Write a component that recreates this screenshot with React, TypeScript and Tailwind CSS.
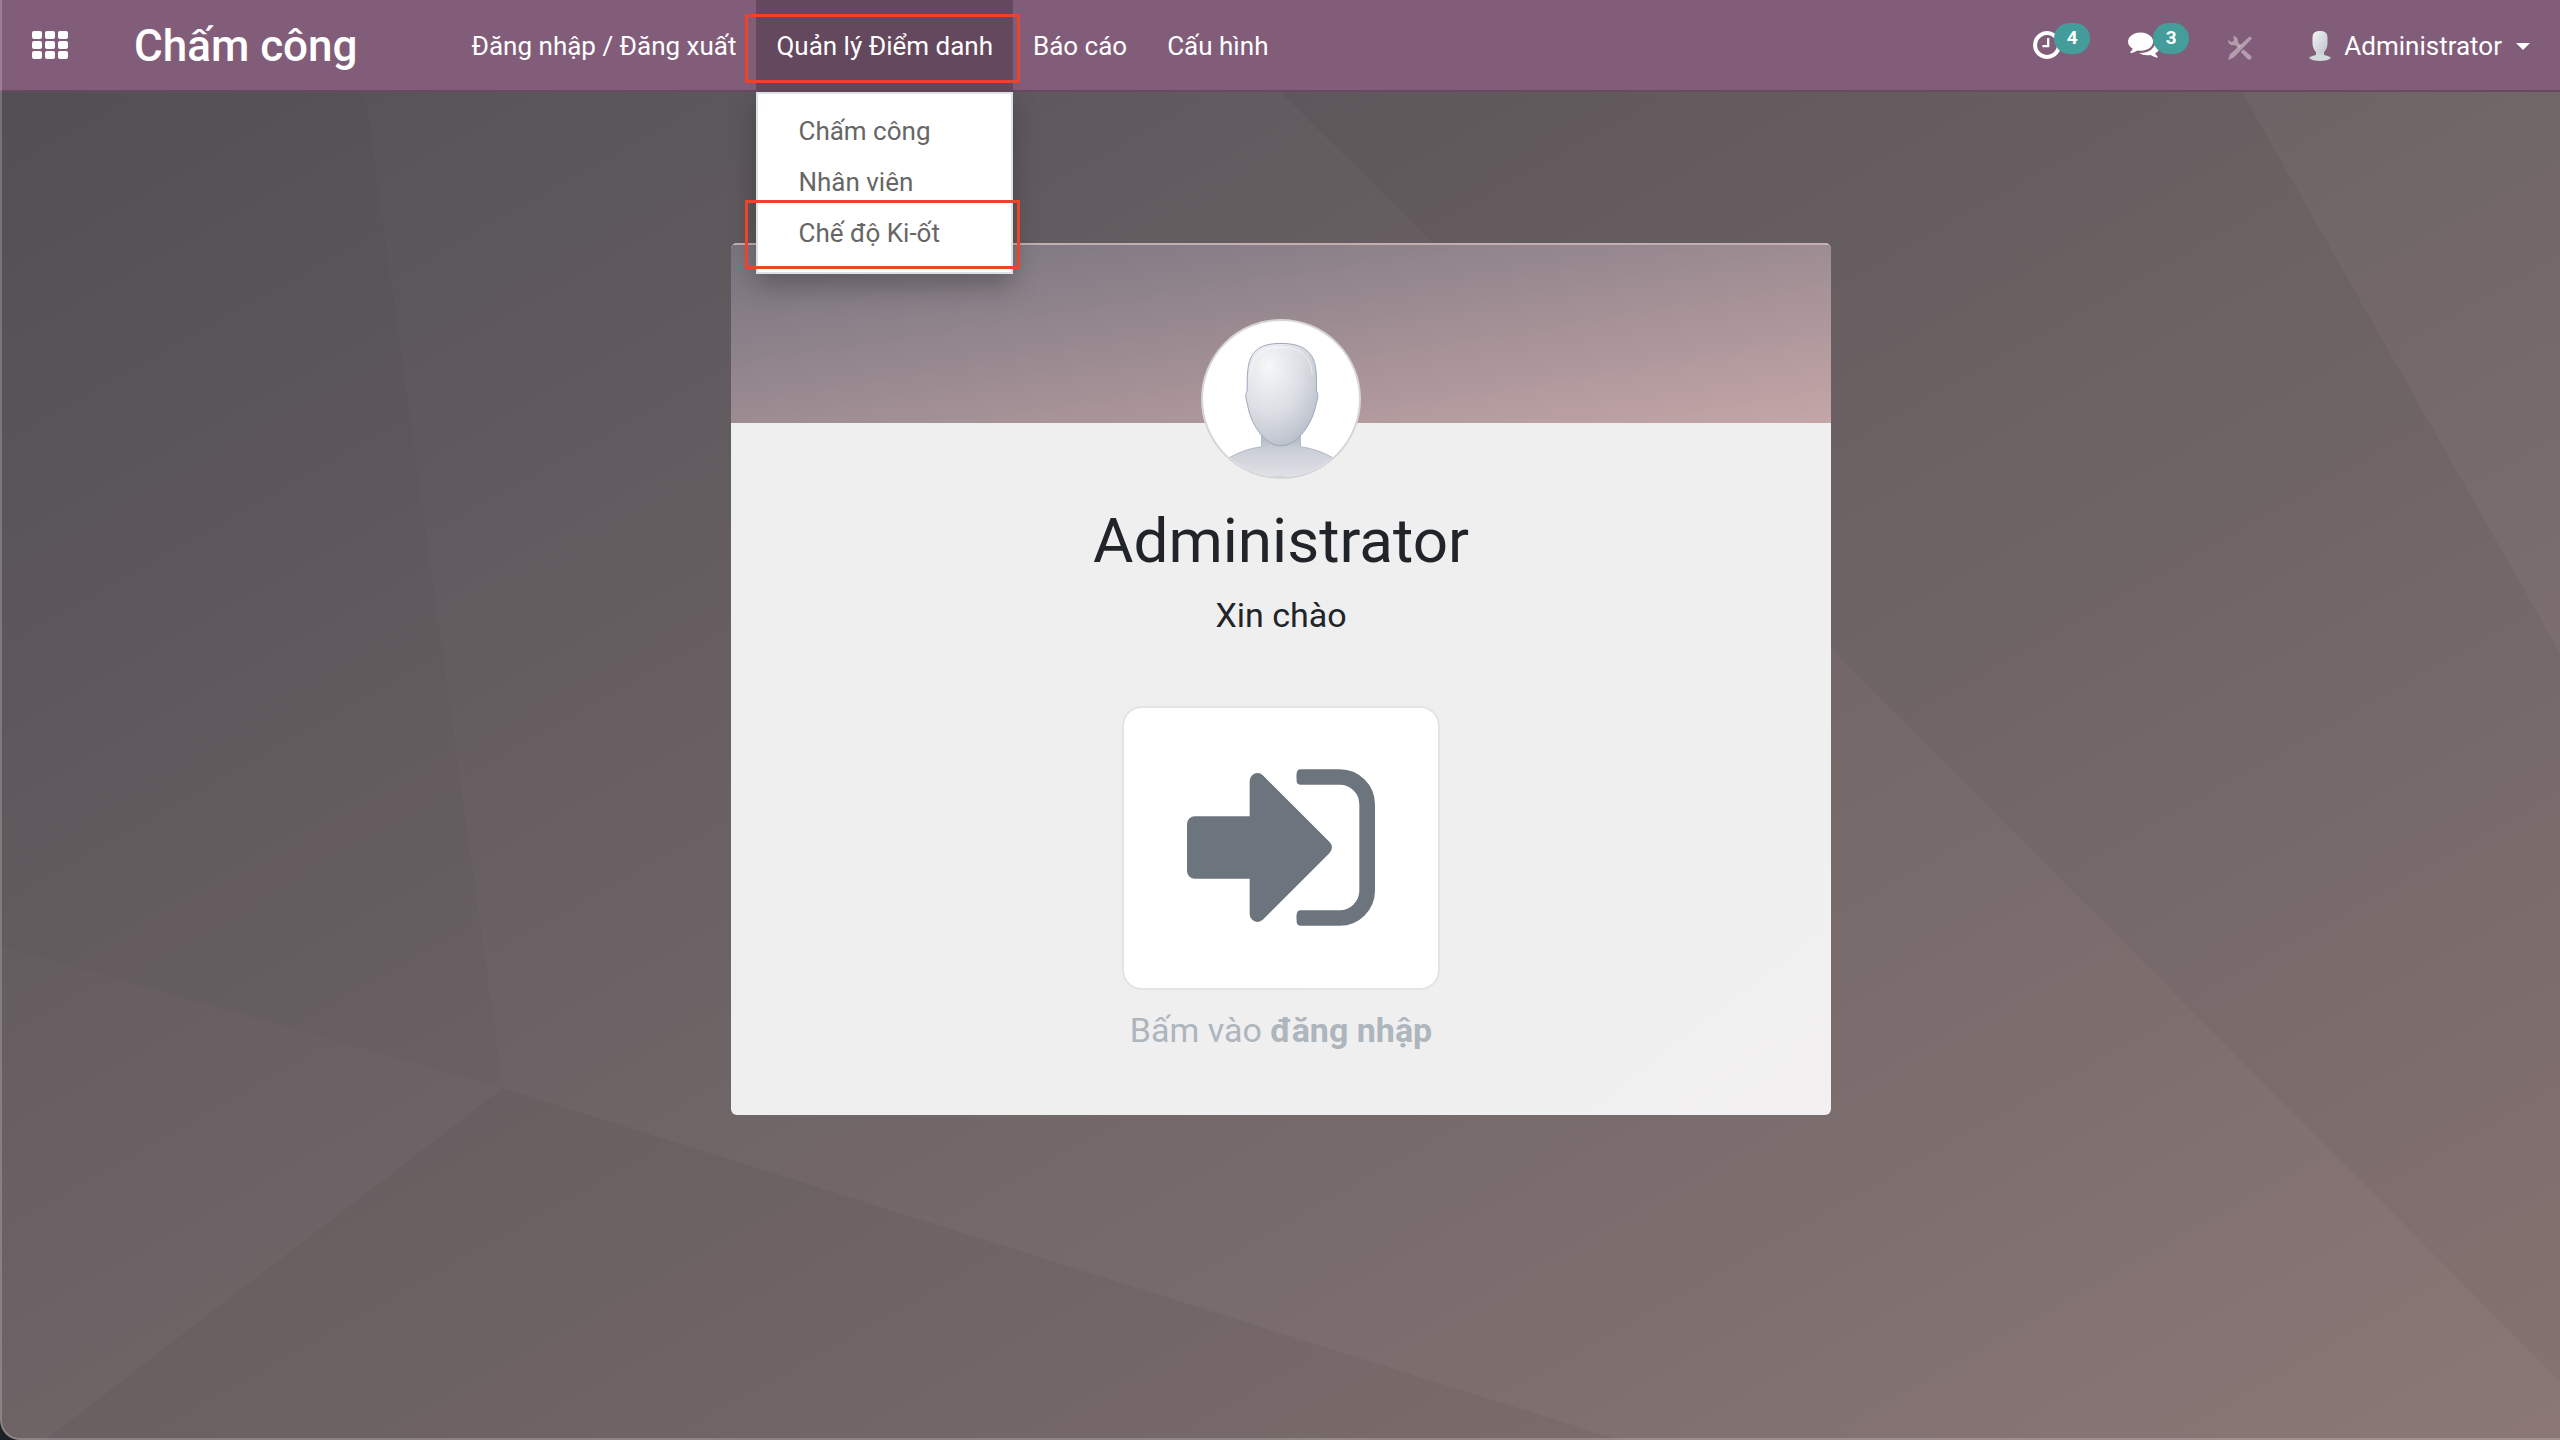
import type { ReactNode } from "react";

/* ──────────────────────────────────────────────────────────────────────────
   Icons
────────────────────────────────────────────────────────────────────────── */

function AppsIcon() {
  return (
    <svg viewBox="0 0 36 28" className="h-7 w-9" fill="currentColor">
      {[0, 10, 20].map((y) =>
        [0, 13, 26].map((x) => (
          <rect key={`${x}-${y}`} x={x} y={y} width="10" height="8" rx="2" />
        )),
      )}
    </svg>
  );
}

function ClockIcon() {
  return (
    <svg viewBox="128 128 1536 1536" className="size-7" fill="currentColor">
      <path d="M1024 544v448q0 14-9 23t-23 9h-320q-14 0-23-9t-9-23v-64q0-14 9-23t23-9h224v-352q0-14 9-23t23-9h64q14 0 23 9t9 23zm416 352q0-148-73-273t-198-198-273-73-273 73-198 198-73 273 73 273 198 198 273 73 273-73 198-198 73-273zm224 0q0 209-103 385.5t-279.5 279.5-385.5 103-385.5-103-279.5-279.5-103-385.5 103-385.5 279.5-279.5 385.5-103 385.5 103 279.5 279.5 103 385.5z" />
    </svg>
  );
}

function CommentsIcon() {
  return (
    <svg viewBox="0 192 1792 1536" className="h-7 w-8" fill="currentColor">
      <path d="M1408 768q0 139-94 257t-256.5 186.5-353.5 68.5q-86 0-176-16-124 88-278 128-36 9-86 16h-3q-11 0-20.5-8t-11.5-21q-1-3-1-6.5t.5-6.5 2-6l2.5-5 3.5-5.5 4-5 4.5-5 4-4.5q5-6 23-25t26-29.5 22.5-29 25-38.5 20.5-44q-124-72-195-177t-71-224q0-139 94-257t256.5-186.5 353.5-68.5 353.5 68.5 256.5 186.5 94 257zm384 256q0 120-71 224.5t-195 176.5q10 24 20.5 44t25 38.5 22.5 29 26 29.5 23 25q1 1 4 4.5t4.5 5 4 5 3.5 5.5l2.5 5 2 6 .5 6.5-1 6.5q-3 14-13 22t-22 7q-50-7-86-16-154-40-278-128-90 16-176 16-271 0-472-132 58 4 88 4 161 0 309-45t264-129q125-92 192-212t67-254q0-77-23-152 129 71 204 178t75 230z" />
    </svg>
  );
}

function ToolsIcon() {
  return (
    <svg viewBox="0 0 24 24" className="size-6" fill="currentColor">
      <path d="M5 .2C6.400 0 8 .6 9 1.900c1 1.300 1.200 2.800.8 4.300l3.200 3.100-2.800 2.700-3.100-2.900C4.500 9.600 2.300 9 1.100 7.400.300 6.300 0 5 .2 3.700l2.700 2.400 2.500-.5.6-2.400z" />
      <path d="m15.400 13.200 7.400 6.600c1 1 1 2.400.1 3.300s-2.400.9-3.300 0L12.800 16z" />
      <path d="M21.800.2 24 2.600 5.800 21.600 0 24l2-5.800z" />
    </svg>
  );
}

function SignInIcon() {
  return (
    <svg
      viewBox="128 256 1536 1280"
      className="h-[157px] w-[188px]"
      fill="currentColor"
    >
      <path d="M1312 896q0 26-19 45l-544 544q-19 19-45 19t-45-19-19-45v-288h-448q-26 0-45-19t-19-45v-384q0-26 19-45t45-19h448v-288q0-26 19-45t45-19 45 19l544 544q19 19 19 45zm352-352v704q0 119-84.500 203.500t-203.500 84.500h-320q-13 0-22.500-9.500t-9.500-22.500q0-4-1-20t-.5-26.500 3-23.500 10-19.500 20.500-6.500h320q66 0 113-47t47-113v-704q0-66-47-113t-113-47h-312l-11.500-1-11.500-3-8-5.500-7-9-2-13.500q0-4-1-20t-.5-26.500 3-23.500 10-19.500 20.500-6.500h320q119 0 203.500 84.500t84.500 203.500z" />
    </svg>
  );
}

/* grey mannequin used for users without a photo */
function AvatarFigure() {
  return (
    <svg viewBox="0 0 160 160" className="size-full">
      <defs>
        <radialGradient id="head" cx="0.32" cy="0.22" r="0.9">
          <stop offset="0" stopColor="#f6f7f8" />
          <stop offset="0.5" stopColor="#dddfe5" />
          <stop offset="1" stopColor="#b3bac6" />
        </radialGradient>
        <linearGradient id="bust" x1="0" y1="0" x2="0" y2="1">
          <stop offset="0" stopColor="#a9b1bf" />
          <stop offset="0.4" stopColor="#cbcfd7" />
          <stop offset="1" stopColor="#dfe1e6" />
        </linearGradient>
      </defs>
      <path
        d="M60 114v15C45 131 34 136 24 142v18h112v-18c-10-6-21-11-36-13v-15z"
        fill="url(#bust)"
        stroke="#b0b9c7"
      />
      <path
        d="M80 23c-22 0-32 8-34 27-1 9-.5 15-.8 22-2 3-1.500 8 .4 13C48 104 63 128 80 128s33-24 36-43c2-5 2.500-10 .5-13-.3-7 .3-13-.7-22C114 31 102 23 80 23z"
        fill="url(#head)"
        stroke="#9aa6b9"
      />
      <path
        d="M49 55c1-17 9-28 31-28s31 11 32 28"
        fill="none"
        stroke="#fff"
        strokeOpacity="0.6"
      />
    </svg>
  );
}

function AvatarThumb() {
  return (
    <svg viewBox="0 0 24 32" className="h-8 w-6">
      <defs>
        <linearGradient id="thumb" x1="0" y1="0" x2="1" y2="1">
          <stop offset="0" stopColor="#f4f5f6" />
          <stop offset="1" stopColor="#bcc3ca" />
        </linearGradient>
      </defs>
      <path
        d="M8 22v3c-3 .5-6 1.500-7 3 2 2 6 3 11 3s9-1 11-3c-1-1.500-4-2.500-7-3v-3z"
        fill="#d3d8dc"
      />
      <path
        d="M12 1C6.500 1 4.500 3.500 4.500 8v5c0 6 3.500 11 7.500 11s7.500-5 7.500-11V8c0-4.500-2-7-7.500-7z"
        fill="url(#thumb)"
      />
    </svg>
  );
}

/* ──────────────────────────────────────────────────────────────────────────
   Backdrop — faceted gradient behind the whole page
────────────────────────────────────────────────────────────────────────── */

function Backdrop() {
  return (
    <svg
      viewBox="0 0 2560 1440"
      preserveAspectRatio="none"
      className="absolute inset-0 size-full"
      aria-hidden="true"
    >
      <path d="M365 92 503 1088 0 946V92z" fill="#000" fillOpacity="0.02" />
      <path d="M503 1088 1620 1440H45z" fill="#000" fillOpacity="0.04" />
      <path
        d="M1280 92H2242L2560 653V1382L1832 649 1430 240z"
        fill="#000"
        fillOpacity="0.035"
      />
      <path d="M2242 92H2560V653z" fill="#fff" fillOpacity="0.01" />
    </svg>
  );
}

/* ──────────────────────────────────────────────────────────────────────────
   Navbar
────────────────────────────────────────────────────────────────────────── */

const reports = ["Báo cáo", "Cấu hình"];
const attendanceItems = ["Chấm công", "Nhân viên", "Chế độ Ki-ốt"];

function Badge({ children }: { children: ReactNode }) {
  return (
    <span className="absolute -top-2 right-[-29px] flex h-[31px] w-9 items-center justify-center rounded-full bg-[#449d9a] text-[19px] font-bold">
      {children}
    </span>
  );
}

function AttendanceMenu() {
  return (
    <div className="relative flex h-[92px] bg-[#64485d]">
      <button className="px-5">Quản lý Điểm danh</button>
      <span className="pointer-events-none absolute -right-[7px] -left-[11px] top-[14px] z-20 h-[69px] border-3 border-[#e9452b]" />

      <ul className="absolute inset-x-0 top-full z-10 border-2 border-[#dee2e6] bg-white pt-3 pb-[13px] text-[#666] shadow-[0_12px_24px_rgba(0,0,0,0.25)]">
        {attendanceItems.map((item) => (
          <li key={item}>
            <a href="#" className="block px-10 leading-[51px]">
              {item}
            </a>
          </li>
        ))}
      </ul>
      <span className="pointer-events-none absolute -right-[7px] -left-[11px] top-[200px] z-20 h-[69px] border-3 border-[#e9452b]" />
    </div>
  );
}

function Navbar() {
  return (
    <header className="relative z-10 flex h-[92px] items-center border-b-2 border-[#68495f] bg-[#825d79] text-[26px] text-white">
      <button className="ml-8" aria-label="Ứng dụng">
        <AppsIcon />
      </button>
      <a href="#" className="ml-[66px] pt-0.5 text-[44px] font-medium">
        Chấm công
      </a>

      <nav className="ml-[94px] flex items-center self-start">
        <a href="#" className="px-5">
          Đăng nhập / Đăng xuất
        </a>
        <AttendanceMenu />
        {reports.map((label) => (
          <a key={label} href="#" className="px-5">
            {label}
          </a>
        ))}
      </nav>

      <div className="ml-auto flex items-center pr-[30px]">
        <button className="relative mr-[67px]" aria-label="Hoạt động">
          <ClockIcon />
          <Badge>4</Badge>
        </button>
        <button className="relative mr-[68px]" aria-label="Tin nhắn">
          <CommentsIcon />
          <Badge>3</Badge>
        </button>
        <button className="mr-[56px] pt-1.5 text-white/40" aria-label="Công cụ">
          <ToolsIcon />
        </button>
        <button className="flex items-center pt-0.5">
          <AvatarThumb />
          <span className="ml-3">Administrator</span>
          <span className="ml-[14px] border-x-[7px] border-t-[7px] border-x-transparent border-t-white" />
        </button>
      </div>
    </header>
  );
}

/* ──────────────────────────────────────────────────────────────────────────
   CheckInCard — greeting and the sign-in button
────────────────────────────────────────────────────────────────────────── */

function CheckInCard() {
  return (
    <section className="flex w-full max-w-[1100px] flex-col items-center overflow-hidden rounded-md bg-linear-to-br from-[#efefef] from-60% to-[#f2f0f0] pb-[65px] text-[#212529]">
      <div className="h-[180px] w-full border-t-2 border-[#c3aeb1] bg-linear-to-br from-[#77737e] to-[#c4a6a7]" />
      <div className="-mt-[104px] size-40 overflow-hidden rounded-full border-2 border-[#d6d6d8] bg-white">
        <AvatarFigure />
      </div>
      <h1 className="mt-6 text-[62px] leading-[76px]">Administrator</h1>
      <p className="mt-4 text-[34px] leading-10">Xin chào</p>
      <button
        className="mt-[71px] flex h-[284px] w-[318px] items-center justify-center rounded-[20px] border-2 border-[#e4e4e4] bg-white pb-0.5 text-[#6c757d]"
        aria-label="Đăng nhập"
      >
        <SignInIcon />
      </button>
      <p className="mt-5 text-[34px] leading-10 text-[#adb5bd]">
        Bấm vào <b>đăng nhập</b>
      </p>
    </section>
  );
}

export default function App() {
  return (
    <div className="min-h-screen bg-[#1c2126] font-[Roboto,sans-serif]">
      <div className="relative min-h-screen overflow-hidden rounded-bl-[20px] bg-linear-to-br from-[#525056] to-[#8b7876]">
        <Backdrop />
        <Navbar />
        <main className="relative flex justify-center pt-[151px] pl-0.5">
          <CheckInCard />
        </main>
        <div className="pointer-events-none absolute inset-0 z-20 rounded-bl-[20px] border-b-2 border-l-2 border-white/20" />
      </div>
    </div>
  );
}
